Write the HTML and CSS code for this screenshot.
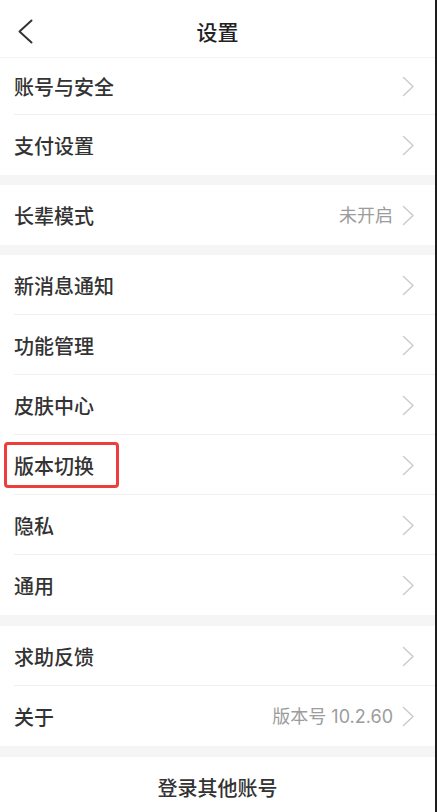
FILE: index.html
```html
<!DOCTYPE html>
<html lang="zh-CN">
<head>
<meta charset="utf-8">
<title>设置</title>
<link rel="stylesheet" href="styles.css">
</head>
<body>
<div class="screen">
  <header class="topbar">
    <span class="back">
      <svg width="16" height="25" viewBox="0 0 16 25"><polyline points="14.5,1.5 2.5,12.5 14.5,23.5" fill="none" stroke="#333" stroke-width="2" stroke-linecap="round" stroke-linejoin="round"/></svg>
    </span>
    <h1 class="title">设置</h1>
  </header>

  <section class="group">
    <div class="row row-first"><span class="label">账号与安全</span><span class="right"><svg class="chev" width="13" height="21" viewBox="0 0 13 21"><polyline points="1.5,1.5 11,10.5 1.5,19.5" fill="none" stroke="#cacaca" stroke-width="1.4" stroke-linecap="round" stroke-linejoin="round"/></svg></span></div>
    <div class="row"><span class="label">支付设置</span><span class="right"><svg class="chev" width="13" height="21" viewBox="0 0 13 21"><polyline points="1.5,1.5 11,10.5 1.5,19.5" fill="none" stroke="#cacaca" stroke-width="1.4" stroke-linecap="round" stroke-linejoin="round"/></svg></span></div>
  </section>
  <div class="gap"></div>

  <section class="group">
    <div class="row"><span class="label">长辈模式</span><span class="right"><span class="value">未开启</span><svg class="chev" width="13" height="21" viewBox="0 0 13 21"><polyline points="1.5,1.5 11,10.5 1.5,19.5" fill="none" stroke="#cacaca" stroke-width="1.4" stroke-linecap="round" stroke-linejoin="round"/></svg></span></div>
  </section>
  <div class="gap"></div>

  <section class="group">
    <div class="row"><span class="label">新消息通知</span><span class="right"><svg class="chev" width="13" height="21" viewBox="0 0 13 21"><polyline points="1.5,1.5 11,10.5 1.5,19.5" fill="none" stroke="#cacaca" stroke-width="1.4" stroke-linecap="round" stroke-linejoin="round"/></svg></span></div>
    <div class="row"><span class="label">功能管理</span><span class="right"><svg class="chev" width="13" height="21" viewBox="0 0 13 21"><polyline points="1.5,1.5 11,10.5 1.5,19.5" fill="none" stroke="#cacaca" stroke-width="1.4" stroke-linecap="round" stroke-linejoin="round"/></svg></span></div>
    <div class="row"><span class="label">皮肤中心</span><span class="right"><svg class="chev" width="13" height="21" viewBox="0 0 13 21"><polyline points="1.5,1.5 11,10.5 1.5,19.5" fill="none" stroke="#cacaca" stroke-width="1.4" stroke-linecap="round" stroke-linejoin="round"/></svg></span></div>
    <div class="row row-marked"><span class="label">版本切换</span><span class="right"><svg class="chev" width="13" height="21" viewBox="0 0 13 21"><polyline points="1.5,1.5 11,10.5 1.5,19.5" fill="none" stroke="#cacaca" stroke-width="1.4" stroke-linecap="round" stroke-linejoin="round"/></svg></span><span class="mark"></span></div>
    <div class="row"><span class="label">隐私</span><span class="right"><svg class="chev" width="13" height="21" viewBox="0 0 13 21"><polyline points="1.5,1.5 11,10.5 1.5,19.5" fill="none" stroke="#cacaca" stroke-width="1.4" stroke-linecap="round" stroke-linejoin="round"/></svg></span></div>
    <div class="row"><span class="label">通用</span><span class="right"><svg class="chev" width="13" height="21" viewBox="0 0 13 21"><polyline points="1.5,1.5 11,10.5 1.5,19.5" fill="none" stroke="#cacaca" stroke-width="1.4" stroke-linecap="round" stroke-linejoin="round"/></svg></span></div>
  </section>
  <div class="gap gap-lg"></div>

  <section class="group">
    <div class="row"><span class="label">求助反馈</span><span class="right"><svg class="chev" width="13" height="21" viewBox="0 0 13 21"><polyline points="1.5,1.5 11,10.5 1.5,19.5" fill="none" stroke="#cacaca" stroke-width="1.4" stroke-linecap="round" stroke-linejoin="round"/></svg></span></div>
    <div class="row"><span class="label">关于</span><span class="right"><span class="value">版本号 10.2.60</span><svg class="chev" width="13" height="21" viewBox="0 0 13 21"><polyline points="1.5,1.5 11,10.5 1.5,19.5" fill="none" stroke="#cacaca" stroke-width="1.4" stroke-linecap="round" stroke-linejoin="round"/></svg></span></div>
  </section>
  <div class="gap gap-lg"></div>

  <section class="group">
    <div class="action">登录其他账号</div>
  </section>
</div>
</body>
</html>
```

FILE: styles.css
```css
* { box-sizing: border-box; }
html, body {
  margin: 0;
  padding: 0;
  background: #1d1d1d;
}
body {
  font-family: "Noto Sans CJK SC", "Noto Sans", sans-serif;
  color: #333;
  -webkit-font-smoothing: antialiased;
}
.screen {
  width: 435px;
  min-height: 812px;
  background: #fff;
  overflow: hidden;
}
.topbar {
  height: 58px;
  border-bottom: 1px solid #f2f2f2;
  display: flex;
  align-items: center;
  justify-content: center;
  position: relative;
}
.back {
  position: absolute;
  left: 17px;
  top: 19px;
  display: block;
  line-height: 0;
}
.title {
  margin: 0;
  font-size: 21px;
  font-weight: 500;
  color: #222;
  line-height: 1;
  padding-top: 6px;
}
.group {
  background: #fff;
}
.row {
  height: 60px;
  display: flex;
  align-items: center;
  justify-content: space-between;
  padding: 1px 20px 0 14px;
  position: relative;
}
.row-first {
  height: 57px;
  padding-top: 0;
}
.row + .row::before {
  content: "";
  position: absolute;
  left: 14px;
  right: 0;
  top: -1px;
  height: 1px;
  background: #f0f0f0;
}
.label {
  font-size: 20px;
  font-weight: 500;
  line-height: 1;
  color: #333;
}
.right {
  display: flex;
  align-items: center;
  gap: 9px;
}
.value {
  font-family: "Inter", "Noto Sans CJK SC", sans-serif;
  font-size: 18px;
  line-height: 1;
  color: #9c9c9c;
}
.chev {
  display: block;
  margin-top: -1px;
}
.gap {
  height: 10px;
  background: #f5f5f5;
}
.gap-lg {
  height: 11px;
}
.mark {
  position: absolute;
  left: 4px;
  top: 7px;
  width: 115px;
  height: 46px;
  border: 3px solid #ee3d3d;
  border-radius: 4px;
}
.action {
  height: 60px;
  display: flex;
  align-items: center;
  justify-content: center;
  font-size: 20px;
  font-weight: 500;
  color: #333;
  padding-top: 1px;
}
```
